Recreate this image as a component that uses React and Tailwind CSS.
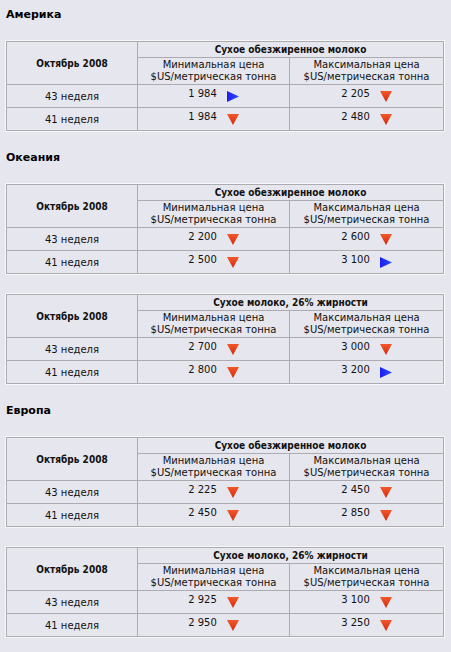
import React from "react";

const Down = () => (
  <svg width="12" height="11" viewBox="0 0 12 11" className="block">
    <defs>
      <linearGradient id="rd" x1="0" y1="0" x2="0" y2="1">
        <stop offset="0" stopColor="#f2582a" />
        <stop offset="1" stopColor="#d42a0c" />
      </linearGradient>
    </defs>
    <polygon points="0,0 12,0 6,11" fill="url(#rd)" />
  </svg>
);

const Right = () => (
  <svg width="12" height="11" viewBox="0 0 12 11" className="block">
    <defs>
      <linearGradient id="bl" x1="0" y1="0" x2="1" y2="0">
        <stop offset="0" stopColor="#1e1ef0" />
        <stop offset="1" stopColor="#2a4cff" />
      </linearGradient>
    </defs>
    <polygon points="0,0 12,5.5 0,11" fill="url(#bl)" />
  </svg>
);

const Val = ({ v, up }) => (
  <div className="flex justify-center items-start pb-[3px]">
    <span className="leading-[12px]">{v}</span>
    <span className="ml-[10px] mt-[3px]">{up ? <Right /> : <Down />}</span>
  </div>
);

const cell = "border border-[#acacb0] p-0";

const Table = ({ title, rows }) => (
  <div className="ml-[5px] w-[440px] border border-[#f7f7fa]">
    <table className="w-full border-collapse table-fixed text-[10px] text-[#111]">
      <colgroup>
        <col className="w-[131px]" />
        <col className="w-[152px]" />
        <col />
      </colgroup>
      <tbody>
        <tr className="h-[16px]">
          <td rowSpan={2} className={`${cell} text-center font-bold [font-family:'DejaVu_Sans_Condensed','DejaVu_Sans',sans-serif] text-[10px]`}>
            Октябрь 2008
          </td>
          <td colSpan={2} className={`${cell} text-center font-bold leading-[14px] [font-family:'DejaVu_Sans_Condensed','DejaVu_Sans',sans-serif]`}>
            {title}
          </td>
        </tr>
        <tr className="h-[27px]">
          <td className={`${cell} text-center leading-[12px]`}>
            Минимальная цена
            <br />
            $US/метрическая тонна
          </td>
          <td className={`${cell} text-center leading-[12px]`}>
            Максимальная цена
            <br />
            $US/метрическая тонна
          </td>
        </tr>
        {rows.map((r) => (
          <tr key={r[0]} className="h-[23px]">
            <td className={`${cell} text-center`}>{r[0]}</td>
            <td className={cell}>
              <Val v={r[1]} up={r[2]} />
            </td>
            <td className={cell}>
              <Val v={r[3]} up={r[4]} />
            </td>
          </tr>
        ))}
      </tbody>
    </table>
  </div>
);

const H = ({ children, first }) => (
  <div className={`${first ? "mt-[7px]" : "mt-[19px]"} ml-[6px] h-[14px] leading-[14px] text-[11px] font-bold text-black`}>
    {children}
  </div>
);

const SKIM = "Сухое обезжиренное молоко";
const WHOLE = "Сухое молоко, 26% жирности";

export default function App() {
  return (
    <div className="w-[451px] h-[652px] bg-[#e6e6ee] overflow-hidden [font-family:'DejaVu_Sans',Verdana,sans-serif]">
      <div className="h-[1px]" />
      <H first>Америка</H>
      <div className="mt-[18px]">
        <Table
          title={SKIM}
          rows={[
            ["43 неделя", "1 984", true, "2 205", false],
            ["41 неделя", "1 984", false, "2 480", false],
          ]}
        />
      </div>
      <H>Океания</H>
      <div className="mt-[18px]">
        <Table
          title={SKIM}
          rows={[
            ["43 неделя", "2 200", false, "2 600", false],
            ["41 неделя", "2 500", false, "3 100", true],
          ]}
        />
      </div>
      <div className="mt-[18px]">
        <Table
          title={WHOLE}
          rows={[
            ["43 неделя", "2 700", false, "3 000", false],
            ["41 неделя", "2 800", false, "3 200", true],
          ]}
        />
      </div>
      <H>Европа</H>
      <div className="mt-[18px]">
        <Table
          title={SKIM}
          rows={[
            ["43 неделя", "2 225", false, "2 450", false],
            ["41 неделя", "2 450", false, "2 850", false],
          ]}
        />
      </div>
      <div className="mt-[18px]">
        <Table
          title={WHOLE}
          rows={[
            ["43 неделя", "2 925", false, "3 100", false],
            ["41 неделя", "2 950", false, "3 250", false],
          ]}
        />
      </div>
    </div>
  );
}
